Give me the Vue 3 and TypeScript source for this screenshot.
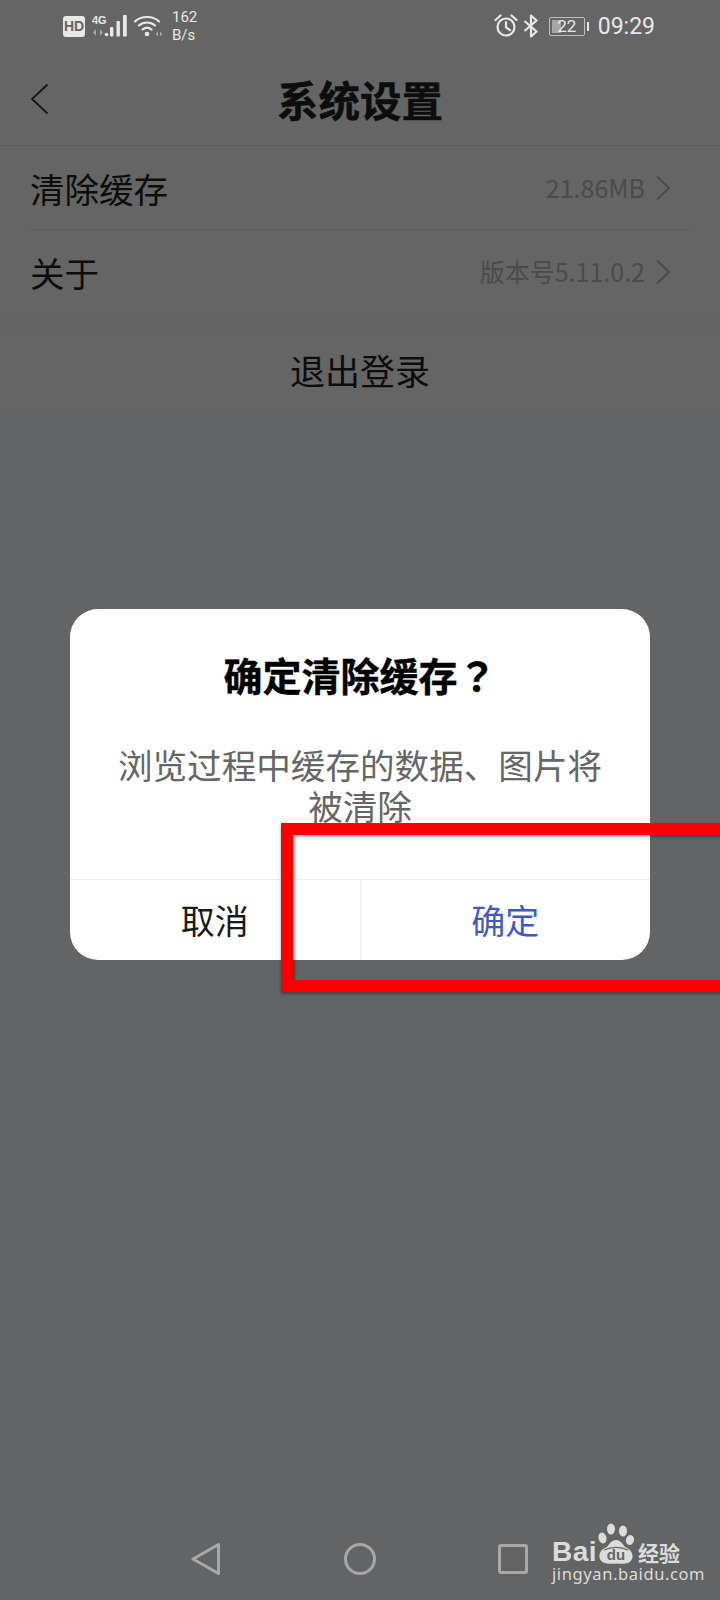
<script setup lang="ts">
interface Row { label: string; value: string }
const rows: Row[] = [
  { label: '清除缓存', value: '21.86MB' },
  { label: '关于', value: '版本号5.11.0.2' },
]
</script>

<template>
  <div class="phone">
    <div class="status">
      <div class="status-left">
        <span class="hd">HD</span>
        <svg class="signal" width="36" height="24" viewBox="0 0 36 24">
          <text x="0" y="10" class="net">4G</text>
          <path d="M4 15v7L1 18.500zM8 15v7l3-3.500z" fill="#a6a6a6" />
          <circle cx="14.500" cy="20.500" r="1.800" fill="#e8e8e8" />
          <rect x="18" y="13" width="3.400" height="9.500" rx=".8" fill="#e8e8e8" />
          <rect x="24.500" y="7" width="3.400" height="15.500" rx=".8" fill="#e8e8e8" />
          <rect x="31" y="1" width="3.800" height="21.500" rx=".8" fill="#e8e8e8" />
        </svg>
        <svg class="wifi" width="29" height="24" viewBox="0 0 29 24">
          <path d="M1 7.500C7 1.500 19 1.500 25 7.500M5 11.500C9.500 7.500 16.500 7.500 21 11.500M8.500 15.500c3-2.400 6-2.400 9 0" stroke="#e8e8e8" stroke-width="2.200" fill="none" stroke-linecap="round" />
          <circle cx="13" cy="20" r="2.300" fill="#e8e8e8" />
          <path d="M21.500 20l2.500-2.500v5zM28.500 20l-2.500-2.500v5z" fill="#a6a6a6" />
        </svg>
        <div class="speed"><span>162</span><span>B/s</span></div>
      </div>
      <div class="status-right">
        <svg width="24" height="24" viewBox="0 0 24 24" fill="none" stroke="#e8e8e8" stroke-width="2.200">
          <circle cx="12" cy="13" r="8.500" />
          <path d="M12 8v5.500l4 2.500M1.500 6l5-4.500M22.500 6l-5-4.500" stroke-linecap="round" />
        </svg>
        <svg width="16" height="24" viewBox="0 0 16 24" fill="none" stroke="#e8e8e8" stroke-width="2.200">
          <path d="M1.500 7l12 10.500L8 22.500v-21l5.500 5L1.500 17" stroke-linejoin="round" />
        </svg>
        <div class="battery">
          <div class="battery-body"><i class="battery-fill"></i><span>22</span></div>
          <i class="battery-nub"></i>
        </div>
        <span class="time">09:29</span>
      </div>
    </div>

    <header class="nav">
      <svg class="back" width="20" height="32" viewBox="0 0 20 32" fill="none" stroke="#171717" stroke-width="1.800">
        <path d="M17.500 1.500L2 16l15.500 14.500" />
      </svg>
      <h1>系统设置</h1>
    </header>

    <section class="list">
      <div v-for="row in rows" :key="row.label" class="row">
        <span class="label">{{ row.label }}</span>
        <span class="value">{{ row.value }}</span>
        <svg class="chev" width="16" height="26" viewBox="0 0 16 26" fill="none" stroke="#4a4a4a" stroke-width="1.800">
          <path d="M2 1.500L14 13 2 24.500" />
        </svg>
      </div>
    </section>

    <div class="logout">退出登录</div>

    <div class="dialog">
      <h2>确定清除缓存<span class="qm">？</span></h2>
      <p>浏览过程中缓存的数据、图片将被清除</p>
      <div class="actions">
        <div class="action">取消</div>
        <div class="action primary">确定</div>
      </div>
    </div>

    <div class="highlight"></div>

    <nav class="softkeys">
      <svg width="30" height="34" viewBox="0 0 30 34" fill="none" stroke="#a8a8a8" stroke-width="3" stroke-linejoin="round">
        <path d="M27.500 2.500v29L2 17z" />
      </svg>
      <svg width="34" height="34" viewBox="0 0 34 34" fill="none" stroke="#a8a8a8" stroke-width="3">
        <circle cx="17" cy="17" r="14.500" />
      </svg>
      <svg width="30" height="30" viewBox="0 0 30 30" fill="none" stroke="#a8a8a8" stroke-width="3">
        <rect x="1.500" y="1.500" width="27" height="27" rx="1.500" />
      </svg>
    </nav>

    <div class="mark">
      <div class="mark-top">
        <span class="bai">Bai</span>
        <span class="paw">
          <svg width="38" height="42" viewBox="0 0 38 42" fill="#dcdcdc">
            <ellipse cx="5.500" cy="15" rx="4" ry="5.500" transform="rotate(-15 5.500 15)" />
            <ellipse cx="14" cy="6" rx="4" ry="5.500" />
            <ellipse cx="26" cy="8" rx="4" ry="5.500" />
            <ellipse cx="33" cy="17" rx="4" ry="5" transform="rotate(15 33 17)" />
            <path d="M19 17c4 0 6 3 9 7 6 2 9 8 7 12-2 5-8 5-15 4.500C12 41 5 41 3 36c-2-5 1-10 7-12 3-4 5-7 9-7z" />
            <path d="M7 27c7-3.500 17-3.500 24 0" fill="none" stroke="#656565" stroke-width="1.200" />
          </svg>
          <span class="du">du</span>
        </span>
        <span class="jy">经验</span>
      </div>
      <div class="mark-url">jingyan.baidu.com</div>
    </div>
  </div>
</template>

<style>
html, body { margin: 0; padding: 0; }
</style>

<style scoped>
.phone {
  position: relative;
  width: 720px;
  height: 1600px;
  overflow: hidden;
  background: #636466;
  font-family: "Noto Sans CJK SC", "Noto Sans", sans-serif;
  color: #0d0d0d;
}
.status {
  height: 52px;
  padding: 0 65px 0 63px;
  display: flex;
  justify-content: space-between;
  align-items: center;
  background: #656565;
  color: #e8e8e8;
}
.status-left, .status-right { display: flex; align-items: center; }
.hd {
  width: 22px;
  height: 21px;
  border-radius: 3px;
  background: #e8e8e8;
  color: #656565;
  font: 700 14px/21px "Liberation Sans", sans-serif;
  text-align: center;
}
.signal { margin-left: 7px; }
.net { font: 700 11px "Liberation Sans", sans-serif; fill: #e8e8e8; }
.wifi { margin-left: 6px; }
.speed {
  margin-left: 9px;
  display: flex;
  flex-direction: column;
  font: 15px/18px Roboto, sans-serif;
}
.status-right { gap: 5px; }
.battery { display: flex; align-items: center; gap: 2px; margin-left: 5px; }
.battery-body {
  position: relative;
  width: 36px;
  height: 19px;
  box-sizing: border-box;
  border: 1px solid #bdbdbd;
  border-radius: 2px;
  font: 17px/17px Roboto, sans-serif;
  text-align: center;
}
.battery-fill {
  position: absolute;
  left: 2px;
  top: 2px;
  bottom: 2px;
  width: 9px;
  background: #a6a6a6;
}
.battery-body span { position: relative; }
.battery-nub { width: 2px; height: 9px; background: #e8e8e8; }
.time { margin-left: 4px; font: 23px/28px Roboto, sans-serif; position: relative; top: 1px; }

.nav {
  position: relative;
  height: 93px;
  display: flex;
  align-items: center;
  justify-content: center;
  background: #656565;
  border-bottom: 1px solid #5c5c5c;
}
.back { position: absolute; left: 30px; top: 31px; }
.nav h1 {
  margin: 0;
  font-size: 41.500px;
  line-height: 56px;
  font-weight: 700;
  -webkit-text-stroke: .5px #0d0d0d;
}

.list { padding: 0 30px; background: #656565; }
.row {
  height: 84px;
  display: flex;
  align-items: center;
  box-sizing: border-box;
  border-bottom: 1px solid #5c5c5c;
}
.row:last-child { border-bottom: 0; }
.label { flex: 1; font-size: 34.500px; line-height: 48px; }
.value { font-size: 25px; line-height: 34px; padding-bottom: 2px; color: #4b4b4b; margin-right: 10px; }
.chev { margin-right: 19px; }

.logout {
  margin-top: 15px;
  height: 84px;
  background: #656565;
  font-size: 35px;
  line-height: 82px;
  text-align: center;
}

.dialog {
  position: absolute;
  left: 70px;
  top: 609px;
  width: 580px;
  height: 351px;
  box-sizing: border-box;
  padding-top: 38px;
  display: flex;
  flex-direction: column;
  border-radius: 28px;
  background: #fff;
  overflow: hidden;
}
.dialog h2 {
  margin: 0;
  font-size: 39px;
  line-height: 54px;
  font-weight: 700;
  color: #000;
  text-align: center;
  -webkit-text-stroke: .4px #000;
}
.qm { font-family: "Noto Sans CJK TC", sans-serif; }
.dialog p {
  margin: 43px 0 0;
  padding: 0 44px;
  font-size: 34.600px;
  line-height: 41px;
  color: #666;
  text-align: center;
}
.actions {
  margin-top: auto;
  height: 80px;
  display: flex;
  border-top: 1px solid #ececec;
}
.action {
  width: 290px;
  font-size: 34px;
  line-height: 80px;
  text-align: center;
  color: #1a1a1a;
}
.action.primary { border-left: 1px solid #ececec; color: #3f5bbf; }

.highlight {
  position: absolute;
  left: 281px;
  top: 823px;
  width: 460px;
  height: 169px;
  box-sizing: border-box;
  border: 12px solid #fa0000;
  box-shadow: 0 2px 3px rgba(0,0,0,.35), inset 2px 2px 3px rgba(0,0,0,.35);
}

.softkeys {
  position: absolute;
  left: 191px;
  top: 1542px;
  width: 337px;
  display: flex;
  justify-content: space-between;
  align-items: center;
}

.mark {
  position: absolute;
  left: 552px;
  top: 1523px;
  width: 132px;
  color: #dcdcdc;
}
.mark-top { display: flex; align-items: flex-end; height: 41px; }
.bai { width: 45px; font: 700 28px/25px "Liberation Sans", sans-serif; letter-spacing: .5px; }
.paw { position: relative; width: 38px; height: 41px; }
.du {
  position: absolute;
  left: 6px;
  bottom: 2px;
  width: 26px;
  text-align: center;
  font: 700 15px/14px "Liberation Sans", sans-serif;
  color: #656565;
}
.jy { font-size: 21px; line-height: 24px; font-weight: 700; margin-left: 3px; }
.mark-url { font: 16.500px/18px "Noto Sans", sans-serif; white-space: nowrap; letter-spacing: .6px; margin-top: 1px; }
</style>
